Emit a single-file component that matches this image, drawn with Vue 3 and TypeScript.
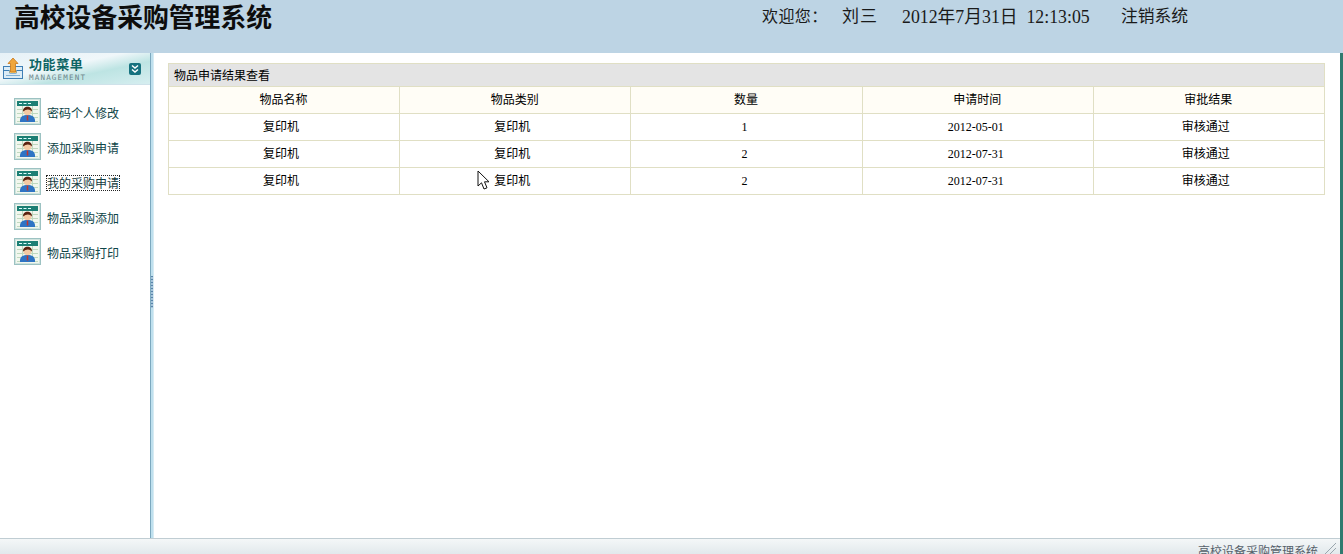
<script setup lang="ts">
const menu: string[] = ['密码个人修改', '添加采购申请', '我的采购申请', '物品采购添加', '物品采购打印']
const columns: string[] = ['物品名称', '物品类别', '数量', '申请时间', '审批结果']
const rows = [
  { name: '复印机', kind: '复印机', qty: 1, date: '2012-05-01', result: '审核通过' },
  { name: '复印机', kind: '复印机', qty: 2, date: '2012-07-31', result: '审核通过' },
  { name: '复印机', kind: '复印机', qty: 2, date: '2012-07-31', result: '审核通过' },
]
</script>

<template>
  <div class="page">
    <header class="top">
      <h1 class="title">高校设备采购管理系统</h1>
      <div class="info">
        <span class="welcome">欢迎您：</span>
        <span class="user">刘三</span>
        <span class="clock">2012年7月31日&nbsp;&nbsp;12:13:05</span>
        <span class="logout">注销系统</span>
      </div>
    </header>
    <div class="below">
      <div class="work">
        <div class="middle">
          <aside class="side">
            <div class="side-head">
              <svg class="head-icon" width="24" height="24" viewBox="0 0 24 24">
                <rect x="1.500" y="9.500" width="19" height="12" fill="#dcecf6" stroke="#3f7fb5" />
                <path d="M1.500 13.500H7.500V16H14.500V13.500H20.500" fill="none" stroke="#3f7fb5" />
                <path d="M7.500 16H14.500V13.500H7.500Z" fill="#f4d27a" />
                <path d="M11 1 L16 6.500 H13.500 V15 H8.500 V6.500 H6 Z" fill="#f0a63c" stroke="#c8771b" stroke-width=".8" />
                <path d="M4 18.500H18" stroke="#7fb0d4" />
              </svg>
              <div class="head-text">
                <div class="head-cn">功能菜单</div>
                <div class="head-en">MANAGEMENT</div>
              </div>
              <svg class="head-toggle" width="12" height="12" viewBox="0 0 12 12">
                <rect width="12" height="12" rx="2" fill="#16727f" />
                <path d="M3 2.500 L6 5 L9 2.500 M3 6.500 L6 9 L9 6.500" fill="none" stroke="#fff" stroke-width="1.500" />
              </svg>
            </div>
            <nav class="menu">
              <div v-for="(item, i) in menu" :key="item" class="menu-item">
                <svg class="menu-icon" width="27" height="27" viewBox="0 0 27 27">
                  <rect x=".5" y=".5" width="26" height="26" fill="#f2f7ee" stroke="#9cc2c2" />
                  <rect x="1.500" y="1.500" width="24" height="24" fill="none" stroke="#cfe3de" />
                  <rect x="3" y="3" width="21" height="5" fill="#1c7f74" />
                  <path d="M5 5.500H8M9.500 5.500H12.500M14 5.500H17" stroke="#dff" />
                  <path d="M3 11.500H24M3 15.500H24M3 19.500H24M3 23.500H24M8.500 8V24M18.500 8V24" stroke="#bfd9bf" />
                  <path d="M6 24 C5.500 18 9.500 17 13.500 17 C17.500 17 21.500 18 21 24 Z" fill="#2f74c4" />
                  <circle cx="13.500" cy="13" r="4.200" fill="#f3c9a2" />
                  <path d="M9.200 13.500 C8 7 19 7 17.800 13.500 C16 10.800 12 10.800 9.200 13.500 Z" fill="#5a2210" />
                  <path d="M13.500 17.500 V22.500" stroke="#c3352c" stroke-width="1.500" />
                </svg>
                <span class="menu-text" :class="{ focused: i === 2 }">{{ item }}</span>
              </div>
            </nav>
          </aside>
          <div class="splitter"><span class="grip"></span></div>
          <main class="content">
            <table class="grid">
              <thead>
                <tr class="caption"><th colspan="5">物品申请结果查看</th></tr>
                <tr class="heads"><th v-for="c in columns" :key="c">{{ c }}</th></tr>
              </thead>
              <tbody>
                <tr v-for="(r, i) in rows" :key="i">
                  <td>{{ r.name }}</td>
                  <td>{{ r.kind }}</td>
                  <td class="num">{{ r.qty }}</td>
                  <td class="num">{{ r.date }}</td>
                  <td>{{ r.result }}</td>
                </tr>
              </tbody>
            </table>
            <svg class="cursor" width="14" height="21" viewBox="0 0 14 21">
              <path d="M1 1 V16 L4.500 12.800 L7 19 L10 17.800 L7.500 11.800 H12 Z" fill="#fff" stroke="#111" stroke-width="1" />
            </svg>
          </main>
        </div>
        <footer class="bottom">
          <span class="foot-text">高校设备采购管理系统</span>
          <svg class="foot-grip" width="14" height="14" viewBox="0 0 14 14">
            <path d="M2 14 L13 3 M7 14 L13 8" stroke="#9aa6ae" />
          </svg>
        </footer>
      </div>
      <div class="edge"></div>
    </div>
  </div>
</template>

<style>
html, body { margin: 0; padding: 0; background: #fff; overflow: hidden; }
</style>

<style scoped>
.page {
  width: 1343px;
  height: 554px;
  display: flex;
  flex-direction: column;
  overflow: hidden;
  font-family: "Noto Sans CJK SC", "Liberation Sans", sans-serif;
  font-size: 12px;
  color: #000;
}
.top {
  height: 53px;
  flex: none;
  background: #bdd4e4;
  display: flex;
  align-items: flex-start;
  box-sizing: border-box;
}
.title {
  margin: 0;
  padding: 0 0 0 14px;
  width: 748px;
  box-sizing: border-box;
  font-size: 25.800px;
  line-height: 37px;
  font-weight: 700;
  font-family: "Liberation Sans", "Noto Sans CJK SC", sans-serif;
  color: #0d0d0d;
}
.info {
  display: flex;
  padding-top: 5px;
  font-size: 16px;
  line-height: 24px;
  font-family: "Liberation Serif", "Noto Sans CJK SC", serif;
  color: #1a1a1a;
  white-space: nowrap;
}
.welcome { margin-left: 14px; width: 80px; letter-spacing: .4px; }
.user { width: 60px; font-size: 17px; letter-spacing: 1px; }
.clock { width: 219px; font-size: 17.800px; }
.logout { font-size: 16.800px; }
.below { flex: 1; display: flex; min-height: 0; }
.work { flex: 1; min-width: 0; display: flex; flex-direction: column; }
.middle { flex: 1; display: flex; min-height: 0; }
.side { width: 150px; flex: none; background: #fff; }
.side-head {
  height: 32px;
  box-sizing: border-box;
  display: flex;
  align-items: center;
  padding: 0 9px 0 2px;
  background: linear-gradient(168deg, #e6f1f7 0%, #f0f7fa 42%, #bde4e3 64%, #d6eef0 100%);
  border-bottom: 1px solid #cfe2ea;
}
.head-icon { flex: none; }
.head-text { margin-left: 3px; flex: 1; padding-top: 1px; }
.head-cn { font-size: 13px; line-height: 15px; font-weight: 700; color: #0d6464; letter-spacing: .6px; }
.head-en { margin-top: 2px; font-family: "DejaVu Sans Mono", monospace; font-size: 7.500px; line-height: 9px; color: #6f868c; letter-spacing: 1.200px; white-space: nowrap; }
.head-toggle { flex: none; }
.menu { padding-top: 13px; padding-left: 14px; display: flex; flex-direction: column; gap: 8px; }
.menu-item { height: 27px; display: flex; align-items: center; }
.menu-icon { flex: none; }
.menu-text { margin-left: 6px; margin-top: 2px; font-size: 12px; line-height: 14px; color: #0e4548; }
.menu-text.focused { outline: 1px dotted #222; outline-offset: 0; color: #123a40; }
.splitter {
  width: 4px;
  flex: none;
  box-sizing: border-box;
  background: #bfe0ee;
  border-left: 1px solid #7ca9bf;
  border-right: 1px solid #d7ebf3;
  display: flex;
  align-items: center;
}
.grip { display: block; width: 100%; height: 32px; margin-top: -7px; background: repeating-linear-gradient(#5a86ab 0 1px, #a5c3da 1px 3px); }
.content { flex: 1; min-width: 0; position: relative; padding: 10px 0 0 14px; background: #fff; }
.grid {
  width: 1157px;
  table-layout: fixed;
  border-collapse: collapse;
  font-size: 12px;
}
.grid th, .grid td {
  box-sizing: border-box;
  border: 1px solid #e0dfc4;
  text-align: center;
  font-weight: 400;
  height: 27px;
  color: #000;
}
.grid td { padding: 0 6px 4px 0; }
.grid th { padding: 0 1px 4px 0; }
.caption th {
  height: 23px;
  background: #e4e4e4;
  text-align: left;
  padding: 0 0 2px 5px;
}
.heads th { background: #fffdf6; }
.grid td.num { font-family: "Liberation Serif", serif; padding: 0 4px 0 0; }
.cursor { position: absolute; left: 323px; top: 117px; }
.edge { width: 3px; flex: none; background: #2f7a6f; }
.bottom {
  height: 16px;
  flex: none;
  box-sizing: border-box;
  border-top: 1px solid #c0cdd3;
  background: linear-gradient(#f4f7f8, #e2e9ec);
  display: flex;
  justify-content: flex-end;
  align-items: flex-start;
  padding-right: 3px;
  overflow: hidden;
  color: #55606a;
}
.foot-text { font-size: 12px; line-height: 14px; margin-top: 5px; margin-right: 5px; }
.foot-grip { margin-top: 1px; flex: none; }
</style>
